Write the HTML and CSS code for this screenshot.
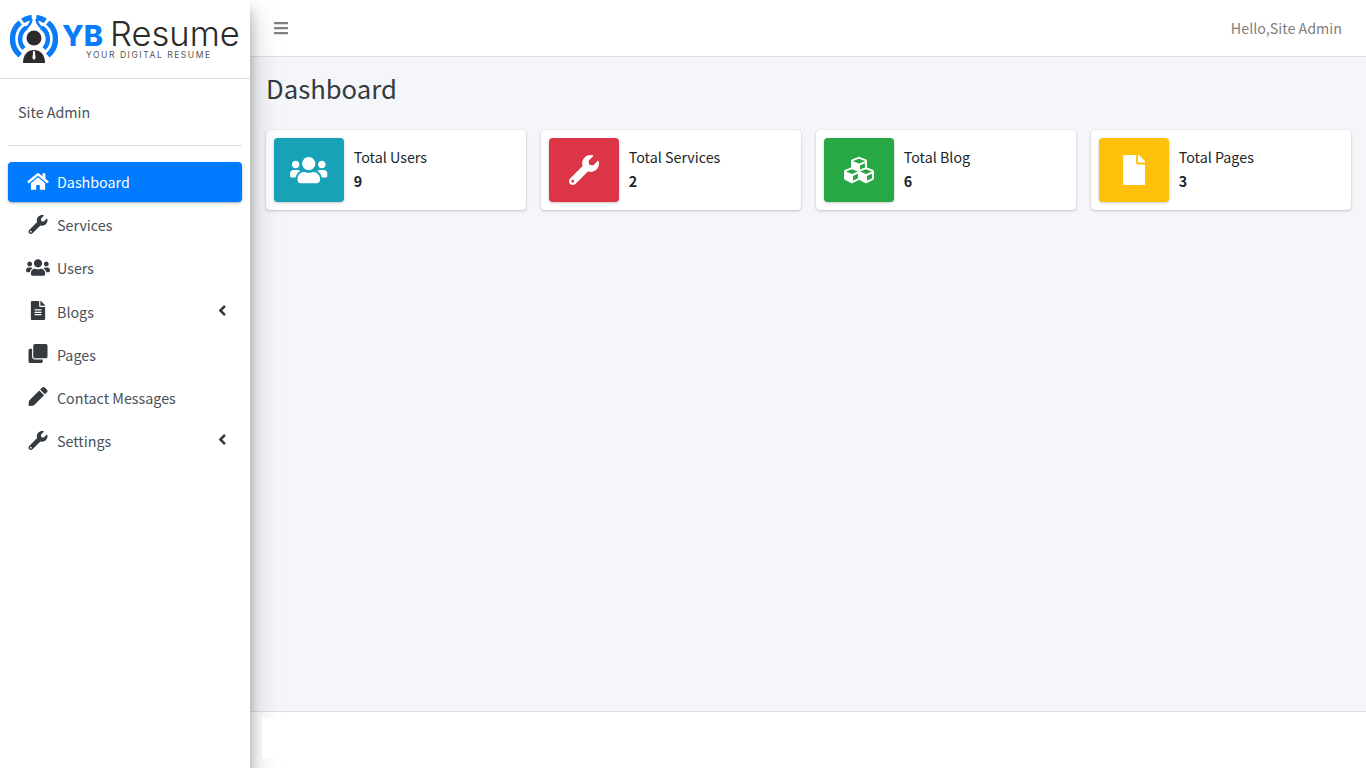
FILE: index.html
```html
<!DOCTYPE html>
<html lang="en">
<head>
    <meta charset="UTF-8">
    <meta name="viewport" content="width=device-width, initial-scale=1.0">
    <title>Dashboard</title>
    <link rel="stylesheet" href="styles.css">
</head>
<body>
    <svg class="icon-defs" aria-hidden="true">
        <symbol id="i-home" viewBox="0 0 576 512"><path d="M280.37 148.26L96 300.11V464a16 16 0 0 0 16 16l112.06-.29a16 16 0 0 0 15.92-16V368a16 16 0 0 1 16-16h64a16 16 0 0 1 16 16v95.64a16 16 0 0 0 16 16.05L464 480a16 16 0 0 0 16-16V300L295.67 148.26a12.19 12.19 0 0 0-15.3 0zM571.6 251.47L488 182.56V44.05a12 12 0 0 0-12-12h-56a12 12 0 0 0-12 12v72.61L318.47 43a48 48 0 0 0-61 0L4.34 251.47a12 12 0 0 0-1.6 16.9l25.5 31A12 12 0 0 0 45.15 301l235.22-193.74a12.19 12.19 0 0 1 15.3 0L530.9 301a12 12 0 0 0 16.9-1.6l25.5-31a12 12 0 0 0-1.7-16.93z"/></symbol>
        <symbol id="i-wrench" viewBox="0 0 512 512"><path d="M507.73 109.1c-2.24-9.03-13.54-12.09-20.12-5.51l-74.36 74.36-67.88-11.31-11.31-67.88 74.36-74.36c6.62-6.62 3.43-17.9-5.66-20.16-47.38-11.74-99.55.91-136.58 37.93-39.64 39.64-50.55 97.1-34.05 147.2L18.74 402.76c-24.99 24.99-24.99 65.51 0 90.5 24.99 24.99 65.51 24.99 90.5 0l213.21-213.21c50.12 16.71 107.47 5.68 147.37-34.22 37.07-37.07 49.7-89.32 37.91-136.73zM64 472c-13.25 0-24-10.75-24-24 0-13.26 10.75-24 24-24s24 10.74 24 24c0 13.25-10.75 24-24 24z"/></symbol>
        <symbol id="i-users" viewBox="0 0 640 512"><path d="M96 224c35.3 0 64-28.7 64-64s-28.7-64-64-64-64 28.7-64 64 28.7 64 64 64zm448 0c35.3 0 64-28.7 64-64s-28.7-64-64-64-64 28.7-64 64 28.7 64 64 64zm32 32h-64c-17.6 0-33.5 7.1-45.1 18.6 40.3 22.1 68.9 62 75.1 109.4h66c17.7 0 32-14.3 32-32v-32c0-35.3-28.7-64-64-64zm-256 0c61.9 0 112-50.1 112-112S381.9 32 320 32 208 82.1 208 144s50.1 112 112 112zm76.8 32h-8.3c-20.8 10-43.9 16-68.5 16s-47.6-6-68.5-16h-8.3C179.6 288 128 339.6 128 403.2V432c0 26.5 21.5 48 48 48h288c26.5 0 48-21.5 48-48v-28.8c0-63.6-51.6-115.2-115.2-115.2zm-223.7-13.4C161.5 263.1 145.6 256 128 256H64c-35.3 0-64 28.7-64 64v32c0 17.7 14.3 32 32 32h65.9c6.3-47.4 34.9-87.3 75.2-109.4z"/></symbol>
        <symbol id="i-file-alt" viewBox="0 0 384 512"><path d="M224 136V0H24C10.7 0 0 10.7 0 24v464c0 13.3 10.7 24 24 24h336c13.3 0 24-10.7 24-24V160H248c-13.2 0-24-10.8-24-24zm64 236c0 6.6-5.4 12-12 12H108c-6.6 0-12-5.4-12-12v-8c0-6.6 5.4-12 12-12h168c6.6 0 12 5.4 12 12v8zm0-64c0 6.6-5.4 12-12 12H108c-6.6 0-12-5.4-12-12v-8c0-6.6 5.4-12 12-12h168c6.6 0 12 5.4 12 12v8zm0-72v8c0 6.6-5.4 12-12 12H108c-6.6 0-12-5.4-12-12v-8c0-6.6 5.4-12 12-12h168c6.6 0 12 5.4 12 12zm96-114.1v6.1H256V0h6.1c6.4 0 12.5 2.5 17 7l97.9 98c4.5 4.5 7 10.6 7 16.9z"/></symbol>
        <symbol id="i-file" viewBox="0 0 384 512"><path d="M224 136V0H24C10.7 0 0 10.7 0 24v464c0 13.3 10.7 24 24 24h336c13.3 0 24-10.7 24-24V160H248c-13.2 0-24-10.8-24-24zm160-14.1v6.1H256V0h6.1c6.4 0 12.5 2.5 17 7l97.9 98c4.5 4.5 7 10.6 7 16.9z"/></symbol>
        <symbol id="i-clone" viewBox="0 0 512 512"><path d="M464 0c26.51 0 48 21.49 48 48v288c0 26.51-21.49 48-48 48H176c-26.51 0-48-21.49-48-48V48c0-26.51 21.49-48 48-48h288M176 416c-44.112 0-80-35.888-80-80V128H48c-26.51 0-48 21.49-48 48v288c0 26.51 21.49 48 48 48h288c26.51 0 48-21.49 48-48v-48H176z"/></symbol>
        <symbol id="i-pen" viewBox="0 0 512 512"><path d="M290.74 93.24l128.02 128.02-277.99 277.99-114.14 12.6C11.35 513.54-1.56 500.62.14 485.34l12.7-114.22 277.9-278.88zm207.2-19.06l-60.11-60.11c-18.75-18.75-49.16-18.75-67.91 0l-56.55 56.55 128.02 128.02 56.55-56.55c18.75-18.76 18.75-49.16 0-67.91z"/></symbol>
        <symbol id="i-angle" viewBox="0 0 256 512"><path d="M31.7 239l136-136c9.4-9.4 24.6-9.4 33.9 0l22.6 22.6c9.4 9.4 9.4 24.6 0 33.9L127.9 256l96.4 96.4c9.4 9.4 9.4 24.6 0 33.9L201.7 409c-9.4 9.4-24.6 9.4-33.9 0l-136-136c-9.5-9.4-9.5-24.6-.1-34z"/></symbol>
        <symbol id="i-bars" viewBox="0 0 448 512"><path d="M16 132h416c8.837 0 16-7.163 16-16V76c0-8.837-7.163-16-16-16H16C7.163 60 0 67.163 0 76v40c0 8.837 7.163 16 16 16zm0 160h416c8.837 0 16-7.163 16-16v-40c0-8.837-7.163-16-16-16H16c-8.837 0-16 7.163-16 16v40c0 8.837 7.163 16 16 16zm0 160h416c8.837 0 16-7.163 16-16v-40c0-8.837-7.163-16-16-16H16c-8.837 0-16 7.163-16 16v40c0 8.837 7.163 16 16 16z"/></symbol>
        <symbol id="i-cubes" viewBox="0 0 512 512"><path d="M488.6 250.2L392 214V105.5c0-15-9.3-28.4-23.4-33.7l-100-37.5c-8.1-3.1-17.1-3.1-25.3 0l-100 37.5c-14.1 5.3-23.4 18.7-23.4 33.7V214l-96.6 36.2C9.3 255.5 0 268.9 0 283.9V394c0 13.6 7.7 26.1 19.9 32.2l100 50c10.1 5.1 22.1 5.1 32.2 0l103.9-52 103.9 52c10.1 5.1 22.1 5.1 32.2 0l100-50c12.2-6.1 19.9-18.6 19.9-32.2V283.9c0-15-9.3-28.4-23.4-33.7zM358 214.8l-85 31.9v-68.2l85-37v73.3zM154 104.1l102-38.2 102 38.2v.6l-102 41.4-102-41.4v-.6zm84 291.1l-85 42.5v-79.1l85-38.8v75.4zm0-112l-102 41.4-102-41.4v-.6l102-38.2 102 38.2v.6zm240 112l-85 42.5v-79.1l85-38.8v75.4zm0-112l-102 41.4-102-41.4v-.6l102-38.2 102 38.2v.6z"/></symbol>
    </svg>

    <div class="wrapper">
        <aside class="sidebar">
            <div class="brand">
                <svg class="brand-mark" viewBox="0 0 48 48" aria-hidden="true">
                    <g fill="none" stroke="#0a7cf7">
                        <path stroke-width="5.500" d="M21.750 2.600A21.500 21.500 0 0 0 12.600 5.800M10.200 7.500A21.500 21.500 0 0 0 10.200 40.500M26.250 2.600A21.500 21.500 0 0 1 35.400 5.800M37.800 7.500A21.500 21.500 0 0 1 37.800 40.500"/>
                        <path stroke-width="4.500" d="M16.500 12.500A13.500 13.500 0 0 0 14 33.500M31.500 12.500A13.500 13.500 0 0 1 34 33.500"/>
                        <path stroke-width="2.500" d="M21.500 4C21.500 8 19.500 10 16.500 13M26.500 4C26.500 8 28.500 10 31.500 13"/>
                    </g>
                    <circle cx="24" cy="23" r="7.500" fill="#2b2b2b"/>
                    <path fill="#2b2b2b" d="M13 48C13 39 18 35 24 35S35 39 35 48Z"/>
                    <path fill="#fff" d="M23.200 36h1.600l.8 7-1.600 2-1.600-2Z"/>
                </svg>
                <div class="brand-text">
                    <div class="brand-name"><span class="brand-yb">YB</span><span class="brand-resume">Resume</span></div>
                    <div class="brand-tag">YOUR DIGITAL RESUME</div>
                </div>
            </div>

            <div class="sidebar-body">
                <div class="user-panel">Site Admin</div>
                <ul class="nav">
                    <li class="nav-item active">
                        <svg class="nav-icon"><use href="#i-home"/></svg>
                        <span>Dashboard</span>
                    </li>
                    <li class="nav-item">
                        <svg class="nav-icon"><use href="#i-wrench"/></svg>
                        <span>Services</span>
                    </li>
                    <li class="nav-item">
                        <svg class="nav-icon"><use href="#i-users"/></svg>
                        <span>Users</span>
                    </li>
                    <li class="nav-item">
                        <svg class="nav-icon"><use href="#i-file-alt"/></svg>
                        <span>Blogs</span>
                        <svg class="nav-arrow"><use href="#i-angle"/></svg>
                    </li>
                    <li class="nav-item">
                        <svg class="nav-icon"><use href="#i-clone"/></svg>
                        <span>Pages</span>
                    </li>
                    <li class="nav-item">
                        <svg class="nav-icon"><use href="#i-pen"/></svg>
                        <span>Contact Messages</span>
                    </li>
                    <li class="nav-item">
                        <svg class="nav-icon"><use href="#i-wrench"/></svg>
                        <span>Settings</span>
                        <svg class="nav-arrow"><use href="#i-angle"/></svg>
                    </li>
                </ul>
            </div>
        </aside>

        <div class="page">
            <header class="topbar">
                <svg class="menu-toggle"><use href="#i-bars"/></svg>
                <div class="hello">Hello,Site Admin</div>
            </header>

            <main class="content">
                <h1>Dashboard</h1>
                <div class="info-row">
                    <div class="info-box">
                        <div class="info-icon bg-info"><svg class="users-icon"><use href="#i-users"/></svg></div>
                        <div class="info-text">
                            <span>Total Users</span>
                            <b>9</b>
                        </div>
                    </div>
                    <div class="info-box">
                        <div class="info-icon bg-danger"><svg class="square-icon"><use href="#i-wrench"/></svg></div>
                        <div class="info-text">
                            <span>Total Services</span>
                            <b>2</b>
                        </div>
                    </div>
                    <div class="info-box">
                        <div class="info-icon bg-success"><svg class="square-icon"><use href="#i-cubes"/></svg></div>
                        <div class="info-text">
                            <span>Total Blog</span>
                            <b>6</b>
                        </div>
                    </div>
                    <div class="info-box">
                        <div class="info-icon bg-warning"><svg class="file-icon"><use href="#i-file"/></svg></div>
                        <div class="info-text">
                            <span>Total Pages</span>
                            <b>3</b>
                        </div>
                    </div>
                </div>
            </main>

            <footer class="footer">
                <div class="footer-box"></div>
            </footer>
        </div>
    </div>
</body>
</html>
```

FILE: styles.css
```css
* {
    box-sizing: border-box;
}
body {
    font-family: "Noto Sans CJK SC", "Noto Sans", Arial, sans-serif;
    font-size: 14.3px;
    line-height: 24px;
    margin: 0;
    color: #212529;
    background-color: #fff;
}
.icon-defs {
    display: none;
}
.wrapper {
    display: flex;
    height: 768px;
    overflow: hidden;
}

/* sidebar */
.sidebar {
    width: 250px;
    flex-shrink: 0;
    background-color: #fff;
    box-shadow: 0 14px 28px rgba(0, 0, 0, .25), 0 10px 10px rgba(0, 0, 0, .22);
    position: relative;
    z-index: 2;
}
.brand {
    height: 79px;
    border-bottom: 1px solid #dee2e6;
    display: flex;
    padding: 15px 0 0 10px;
}
.brand-mark {
    width: 48px;
    height: 48px;
    flex-shrink: 0;
}
.brand-text {
    margin-left: 4px;
}
.brand-name {
    display: flex;
    align-items: baseline;
    font-family: Inter, "Liberation Sans", sans-serif;
    line-height: 32px;
    white-space: nowrap;
    margin-top: 3px;
}
.brand-yb {
    font-size: 29px;
    font-weight: 800;
    color: #0a7cf7;
}
.brand-resume {
    font-size: 34.500px;
    font-weight: 300;
    color: #2b2b2b;
    margin-left: 7px;
}
.brand-tag {
    font-family: Inter, "Liberation Sans", sans-serif;
    font-size: 8.500px;
    line-height: 8px;
    letter-spacing: 1.550px;
    color: #555;
    margin: -1px 0 0 24px;
    white-space: nowrap;
}
.sidebar-body {
    padding: 0 8px;
}
.user-panel {
    height: 67px;
    padding: 21px 10px 0;
    border-bottom: 1px solid #dee2e6;
    color: #495057;
}
.nav {
    list-style: none;
    margin: 16px 0 0;
    padding: 0;
}
.nav-item {
    display: flex;
    align-items: center;
    height: 40px;
    margin-bottom: 3.2px;
    padding: 0 16px 0 17px;
    border-radius: 4px;
    color: #495057;
}
.nav-item.active {
    background-color: #007bff;
    color: #fff;
    box-shadow: 0 1px 3px rgba(0, 0, 0, .12), 0 1px 2px rgba(0, 0, 0, .24);
}
.nav-icon {
    width: 26px;
    height: 19px;
    margin-right: 6px;
    margin-top: -2px;
    fill: #343a40;
}
.active .nav-icon {
    fill: #fff;
}
.nav-arrow {
    width: 8.5px;
    height: 17px;
    margin-left: auto;
    margin-top: -3px;
    fill: #343a40;
}

/* right side */
.page {
    flex: 1;
    display: flex;
    flex-direction: column;
    min-width: 0;
}
.topbar {
    height: 57px;
    flex-shrink: 0;
    display: flex;
    align-items: center;
    justify-content: space-between;
    padding: 0 24px;
    background-color: #fff;
    border-bottom: 1px solid #dee2e6;
}
.menu-toggle {
    width: 14px;
    height: 16px;
    fill: #808080;
}
.hello {
    color: #808080;
}
.content {
    flex: 1;
    background-color: #f4f6f9;
    padding: 14px 15px 0 16px;
}
.content h1 {
    font-size: 25.7px;
    font-weight: 400;
    line-height: 34px;
    color: #343a40;
    margin: 0 0 25px;
}
.info-row {
    display: grid;
    grid-template-columns: repeat(4, 260px);
    gap: 15px;
}
.info-box {
    display: flex;
    min-height: 80px;
    padding: 8px;
    background-color: #fff;
    border-radius: 4px;
    box-shadow: 0 0 1px rgba(0, 0, 0, .125), 0 1px 3px rgba(0, 0, 0, .2);
}
.info-icon {
    width: 70px;
    display: flex;
    align-items: center;
    justify-content: center;
    border-radius: 4px;
    box-shadow: 0 0 1px rgba(0, 0, 0, .125), 0 1px 3px rgba(0, 0, 0, .2);
    fill: #fff;
}
.bg-info {
    background-color: #17a2b8;
}
.bg-danger {
    background-color: #dc3545;
}
.bg-success {
    background-color: #28a745;
}
.bg-warning {
    background-color: #ffc107;
}
.users-icon {
    width: 37.5px;
    height: 30px;
}
.square-icon {
    width: 30px;
    height: 30px;
}
.file-icon {
    width: 22.5px;
    height: 30px;
}
.info-text {
    display: flex;
    flex-direction: column;
    justify-content: center;
    padding: 0 10px 2px 9.7px;
}
.info-text b {
    font-weight: 700;
}
.footer {
    height: 57px;
    flex-shrink: 0;
    padding: 6px 12px;
    background-color: #fff;
    border-top: 1px solid #dee2e6;
}
.footer-box {
    width: 40px;
    height: 40px;
    background-color: #fff;
    position: relative;
    z-index: 3;
}
```
